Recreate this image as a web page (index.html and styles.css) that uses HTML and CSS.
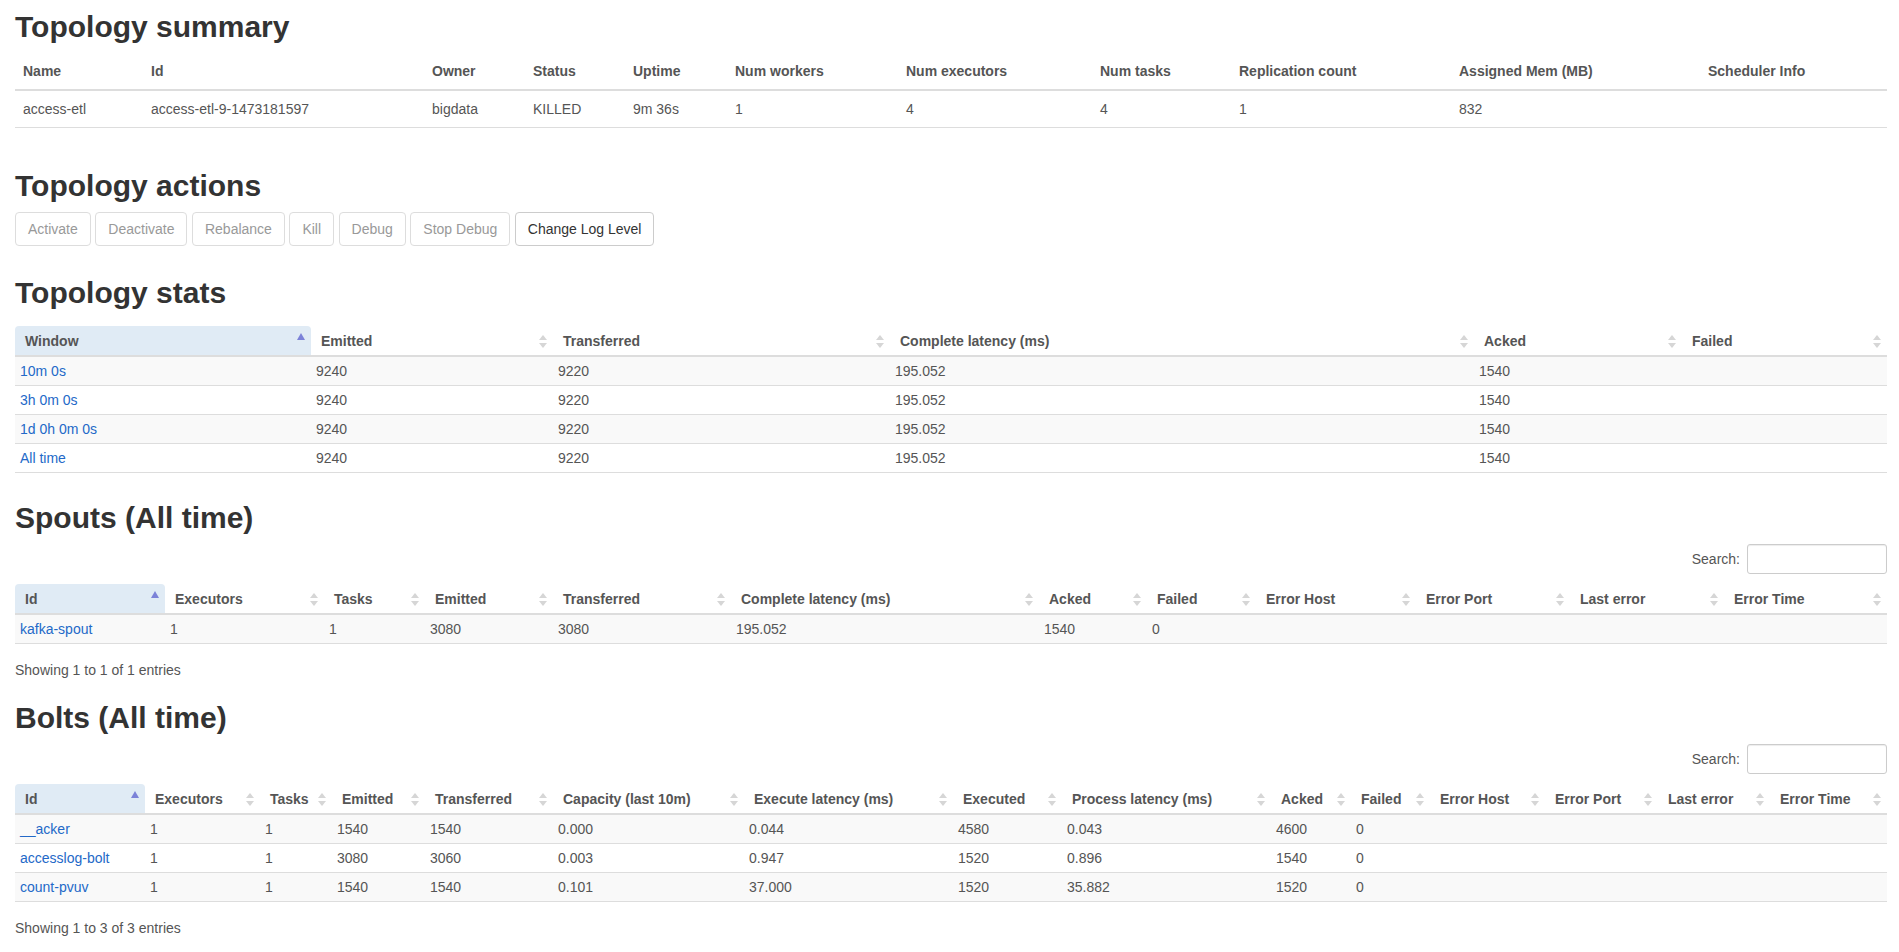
FILE: index.html
```html
<!DOCTYPE html>
<html>
<head>
<meta charset="utf-8">
<title>Topology summary</title>
<link rel="stylesheet" href="styles.css">
</head>
<body>
<div class="page">
  <h2 class="first">Topology summary</h2>
  <table class="tbl summary">
    <colgroup><col><col><col><col><col><col><col><col><col><col><col></colgroup>
    <thead>
      <tr><th>Name</th><th>Id</th><th>Owner</th><th>Status</th><th>Uptime</th><th>Num workers</th><th>Num executors</th><th>Num tasks</th><th>Replication count</th><th>Assigned Mem (MB)</th><th>Scheduler Info</th></tr>
    </thead>
    <tbody>
      <tr><td>access-etl</td><td>access-etl-9-1473181597</td><td>bigdata</td><td>KILLED</td><td>9m 36s</td><td>1</td><td>4</td><td>4</td><td>1</td><td>832</td><td></td></tr>
    </tbody>
  </table>

  <h2>Topology actions</h2>
  <div class="actions">
    <button class="btn" disabled>Activate</button>
    <button class="btn" disabled>Deactivate</button>
    <button class="btn" disabled>Rebalance</button>
    <button class="btn" disabled>Kill</button>
    <button class="btn" disabled>Debug</button>
    <button class="btn" disabled>Stop Debug</button>
    <button class="btn">Change Log Level</button>
  </div>

  <h2>Topology stats</h2>
  <table class="tbl dt stats">
    <colgroup><col><col><col><col><col><col></colgroup>
    <thead>
      <tr>
        <th class="sorted"><div class="th"><span>Window</span><i class="si asc"><b></b><b></b></i></div></th>
        <th><div class="th"><span>Emitted</span><i class="si"><b></b><b></b></i></div></th>
        <th><div class="th"><span>Transferred</span><i class="si"><b></b><b></b></i></div></th>
        <th><div class="th"><span>Complete latency (ms)</span><i class="si"><b></b><b></b></i></div></th>
        <th><div class="th"><span>Acked</span><i class="si"><b></b><b></b></i></div></th>
        <th><div class="th"><span>Failed</span><i class="si"><b></b><b></b></i></div></th>
      </tr>
    </thead>
    <tbody>
      <tr><td><a href="#">10m 0s</a></td><td>9240</td><td>9220</td><td>195.052</td><td>1540</td><td></td></tr>
      <tr><td><a href="#">3h 0m 0s</a></td><td>9240</td><td>9220</td><td>195.052</td><td>1540</td><td></td></tr>
      <tr><td><a href="#">1d 0h 0m 0s</a></td><td>9240</td><td>9220</td><td>195.052</td><td>1540</td><td></td></tr>
      <tr><td><a href="#">All time</a></td><td>9240</td><td>9220</td><td>195.052</td><td>1540</td><td></td></tr>
    </tbody>
  </table>

  <h2>Spouts (All time)</h2>
  <div class="search"><label>Search:</label><input type="search" class="search-input"></div>
  <table class="tbl dt spouts">
    <colgroup><col><col><col><col><col><col><col><col><col><col><col><col></colgroup>
    <thead>
      <tr>
        <th class="sorted"><div class="th"><span>Id</span><i class="si asc"><b></b><b></b></i></div></th>
        <th><div class="th"><span>Executors</span><i class="si"><b></b><b></b></i></div></th>
        <th><div class="th"><span>Tasks</span><i class="si"><b></b><b></b></i></div></th>
        <th><div class="th"><span>Emitted</span><i class="si"><b></b><b></b></i></div></th>
        <th><div class="th"><span>Transferred</span><i class="si"><b></b><b></b></i></div></th>
        <th><div class="th"><span>Complete latency (ms)</span><i class="si"><b></b><b></b></i></div></th>
        <th><div class="th"><span>Acked</span><i class="si"><b></b><b></b></i></div></th>
        <th><div class="th"><span>Failed</span><i class="si"><b></b><b></b></i></div></th>
        <th><div class="th"><span>Error Host</span><i class="si"><b></b><b></b></i></div></th>
        <th><div class="th"><span>Error Port</span><i class="si"><b></b><b></b></i></div></th>
        <th><div class="th"><span>Last error</span><i class="si"><b></b><b></b></i></div></th>
        <th><div class="th"><span>Error Time</span><i class="si"><b></b><b></b></i></div></th>
      </tr>
    </thead>
    <tbody>
      <tr><td><a href="#">kafka-spout</a></td><td>1</td><td>1</td><td>3080</td><td>3080</td><td>195.052</td><td>1540</td><td>0</td><td></td><td></td><td></td><td></td></tr>
    </tbody>
  </table>
  <div class="info">Showing 1 to 1 of 1 entries</div>

  <h2 class="bolts-h">Bolts (All time)</h2>
  <div class="search"><label>Search:</label><input type="search" class="search-input"></div>
  <table class="tbl dt bolts">
    <colgroup><col><col><col><col><col><col><col><col><col><col><col><col><col><col><col></colgroup>
    <thead>
      <tr>
        <th class="sorted"><div class="th"><span>Id</span><i class="si asc"><b></b><b></b></i></div></th>
        <th><div class="th"><span>Executors</span><i class="si"><b></b><b></b></i></div></th>
        <th><div class="th"><span>Tasks</span><i class="si"><b></b><b></b></i></div></th>
        <th><div class="th"><span>Emitted</span><i class="si"><b></b><b></b></i></div></th>
        <th><div class="th"><span>Transferred</span><i class="si"><b></b><b></b></i></div></th>
        <th><div class="th"><span>Capacity (last 10m)</span><i class="si"><b></b><b></b></i></div></th>
        <th><div class="th"><span>Execute latency (ms)</span><i class="si"><b></b><b></b></i></div></th>
        <th><div class="th"><span>Executed</span><i class="si"><b></b><b></b></i></div></th>
        <th><div class="th"><span>Process latency (ms)</span><i class="si"><b></b><b></b></i></div></th>
        <th><div class="th"><span>Acked</span><i class="si"><b></b><b></b></i></div></th>
        <th><div class="th"><span>Failed</span><i class="si"><b></b><b></b></i></div></th>
        <th><div class="th"><span>Error Host</span><i class="si"><b></b><b></b></i></div></th>
        <th><div class="th"><span>Error Port</span><i class="si"><b></b><b></b></i></div></th>
        <th><div class="th"><span>Last error</span><i class="si"><b></b><b></b></i></div></th>
        <th><div class="th"><span>Error Time</span><i class="si"><b></b><b></b></i></div></th>
      </tr>
    </thead>
    <tbody>
      <tr><td><a href="#">__acker</a></td><td>1</td><td>1</td><td>1540</td><td>1540</td><td>0.000</td><td>0.044</td><td>4580</td><td>0.043</td><td>4600</td><td>0</td><td></td><td></td><td></td><td></td></tr>
      <tr><td><a href="#">accesslog-bolt</a></td><td>1</td><td>1</td><td>3080</td><td>3060</td><td>0.003</td><td>0.947</td><td>1520</td><td>0.896</td><td>1540</td><td>0</td><td></td><td></td><td></td><td></td></tr>
      <tr><td><a href="#">count-pvuv</a></td><td>1</td><td>1</td><td>1540</td><td>1540</td><td>0.101</td><td>37.000</td><td>1520</td><td>35.882</td><td>1520</td><td>0</td><td></td><td></td><td></td><td></td></tr>
    </tbody>
  </table>
  <div class="info">Showing 1 to 3 of 3 entries</div>
</div>
</body>
</html>
```

FILE: styles.css
```css
html, body {
  margin: 0;
  padding: 0;
  background: #fff;
}
body {
  font-family: "Liberation Sans", Arial, Helvetica, sans-serif;
  font-size: 14px;
  line-height: 20px;
  color: #555;
}
.page {
  display: flex;
  flex-direction: column;
  padding: 0 12px 0 15px;
}
h2 {
  font-size: 30px;
  line-height: 33px;
  font-weight: bold;
  color: #333;
  margin: 20px 0 10px;
}
h2.first { margin-top: 10px; }
h2.bolts-h { margin-top: 21px; }

a { color: #2369c8; text-decoration: none; }

/* tables */
.tbl {
  width: 100%;
  border-collapse: collapse;
  table-layout: fixed;
  border-spacing: 0;
}
.tbl th {
  text-align: left;
  font-weight: bold;
  color: #555;
  border-bottom: 2px solid #ddd;
  vertical-align: bottom;
  white-space: nowrap;
}
.tbl td {
  border-bottom: 1px solid #ddd;
  white-space: nowrap;
  overflow: hidden;
}
.summary { margin-bottom: 21px; }
.summary th, .summary td { padding: 8px; }

.dt th { padding: 5px 6px 4px 10px; }
.dt td { padding: 4px 5px; }
.dt tbody tr:nth-child(odd) td { background: #f9f9f9; }
.dt th.sorted {
  background: #e0ebf5;
  border-top-left-radius: 4px;
  border-top-right-radius: 4px;
}
.th {
  display: flex;
  align-items: center;
  justify-content: space-between;
}
.si {
  display: flex;
  flex-direction: column;
  gap: 3px;
  flex: none;
}
.si b {
  display: block;
  width: 0;
  height: 0;
  border-left: 4px solid transparent;
  border-right: 4px solid transparent;
}
.si b:first-child { border-bottom: 5px solid #d6d6d6; }
.si b:last-child { border-top: 5px solid #d6d6d6; }
.si.asc b:first-child { border-bottom: 7px solid #7c82d8; margin-top: -2px; }
.si.asc b:last-child { border-top-color: transparent; }

.stats { margin-top: 7px; margin-bottom: 8px; }
.spouts, .bolts { margin-top: 10px; }

.summary col:nth-child(1) { width: 128px; }
.summary col:nth-child(2) { width: 281px; }
.summary col:nth-child(3) { width: 101px; }
.summary col:nth-child(4) { width: 100px; }
.summary col:nth-child(5) { width: 102px; }
.summary col:nth-child(6) { width: 171px; }
.summary col:nth-child(7) { width: 194px; }
.summary col:nth-child(8) { width: 139px; }
.summary col:nth-child(9) { width: 220px; }
.summary col:nth-child(10) { width: 249px; }
.summary col:nth-child(11) { width: 187px; }

.stats col:nth-child(1) { width: 296px; }
.stats col:nth-child(2) { width: 242px; }
.stats col:nth-child(3) { width: 337px; }
.stats col:nth-child(4) { width: 584px; }
.stats col:nth-child(5) { width: 208px; }
.stats col:nth-child(6) { width: 205px; }

.spouts col:nth-child(1) { width: 150px; }
.spouts col:nth-child(2) { width: 159px; }
.spouts col:nth-child(3) { width: 101px; }
.spouts col:nth-child(4) { width: 128px; }
.spouts col:nth-child(5) { width: 178px; }
.spouts col:nth-child(6) { width: 308px; }
.spouts col:nth-child(7) { width: 108px; }
.spouts col:nth-child(8) { width: 109px; }
.spouts col:nth-child(9) { width: 160px; }
.spouts col:nth-child(10) { width: 154px; }
.spouts col:nth-child(11) { width: 154px; }
.spouts col:nth-child(12) { width: 163px; }

.bolts col:nth-child(1) { width: 130px; }
.bolts col:nth-child(2) { width: 115px; }
.bolts col:nth-child(3) { width: 72px; }
.bolts col:nth-child(4) { width: 93px; }
.bolts col:nth-child(5) { width: 128px; }
.bolts col:nth-child(6) { width: 191px; }
.bolts col:nth-child(7) { width: 209px; }
.bolts col:nth-child(8) { width: 109px; }
.bolts col:nth-child(9) { width: 209px; }
.bolts col:nth-child(10) { width: 80px; }
.bolts col:nth-child(11) { width: 79px; }
.bolts col:nth-child(12) { width: 115px; }
.bolts col:nth-child(13) { width: 113px; }
.bolts col:nth-child(14) { width: 112px; }
.bolts col:nth-child(15) { width: 117px; }

/* buttons */
.actions {
  display: flex;
  gap: 4.5px;
  margin-bottom: 10px;
}
.btn {
  font-family: inherit;
  font-size: 14px;
  line-height: 20px;
  padding: 6px 12px;
  border: 1px solid #ccc;
  border-radius: 4px;
  background: #fff;
  color: #333;
  cursor: pointer;
}
.btn:disabled {
  color: #999;
  border-color: #ddd;
  cursor: not-allowed;
}

/* search */
.search {
  display: flex;
  justify-content: flex-end;
  align-items: center;
  height: 30px;
}
.search label { margin-right: 7px; }
.search-input {
  box-sizing: border-box;
  width: 140px;
  height: 30px;
  padding: 5px 10px;
  font-size: 12px;
  border: 1px solid #ccc;
  border-radius: 3px;
  box-shadow: inset 0 1px 1px rgba(0,0,0,.075);
  margin: 0;
}

.info {
  margin-top: 8px;
  padding-top: 8px;
}
```
